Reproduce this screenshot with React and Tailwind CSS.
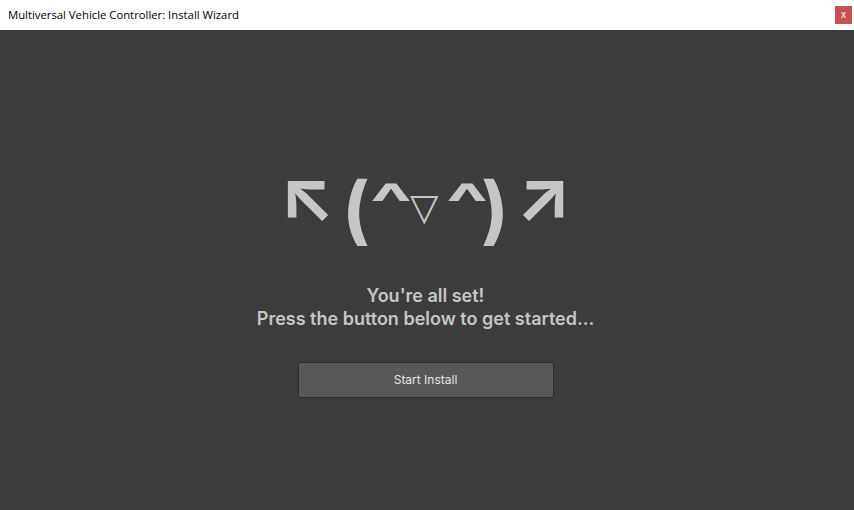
import React from "react";

const App = () => {
  return (
    <div className="w-[854px] h-[510px] flex flex-col bg-[#3c3c3c] overflow-hidden">
      {/* title bar */}
      <div className="h-[30px] bg-white flex items-center justify-between pl-[8px] pr-[2px]">
        <span className="text-[11.3px] text-black font-['Open_Sans',sans-serif]">
          Multiversal Vehicle Controller: Install Wizard
        </span>
        <div className="w-[17px] h-[18px] bg-[#c75050] flex items-center justify-center text-white text-[10px] leading-none font-['Liberation_Sans',sans-serif]">
          x
        </div>
      </div>

      <div className="flex-1 flex flex-col items-center pt-[128px] pr-[3px] text-[#c6c6c6]">
        {/* kaomoji */}
        <div className="flex items-start h-[88px] pr-[17px] font-bold leading-none font-['Inter',sans-serif]">
          <span className="w-[40px] text-center text-[73px]">↖</span>
          <span className="ml-[23px] w-[20px] mt-[14px] text-center text-[74px]">(</span>
          <span className="ml-[12.5px] w-[32px] mt-[17px] text-center text-[56px] scale-x-160">^</span>
          <span className="ml-[3.5px] w-[28px] mt-[31px] text-center text-[37px] font-normal font-['DejaVu_Sans',sans-serif]">▽</span>
          <span className="ml-[13px] w-[32px] mt-[17px] text-center text-[56px] scale-x-160">^</span>
          <span className="ml-[-2px] w-[20px] mt-[14px] text-center text-[74px]">)</span>
          <span className="ml-[14px] w-[40px] text-center text-[73px]">↗</span>
        </div>
        <div className="mt-[38px] text-[18px] font-semibold leading-[23px] text-center font-['Inter',sans-serif]">
          <div>You're all set!</div>
          <div>Press the button below to get started...</div>
        </div>
        <button className="mt-[32px] w-[256px] h-[36px] bg-[#585858] border border-[#2b2b2b] rounded-[3px] text-[12px] text-[#e4e4e4] font-['Inter',sans-serif]">
          Start Install
        </button>
      </div>
    </div>
  );
};

export default App;
